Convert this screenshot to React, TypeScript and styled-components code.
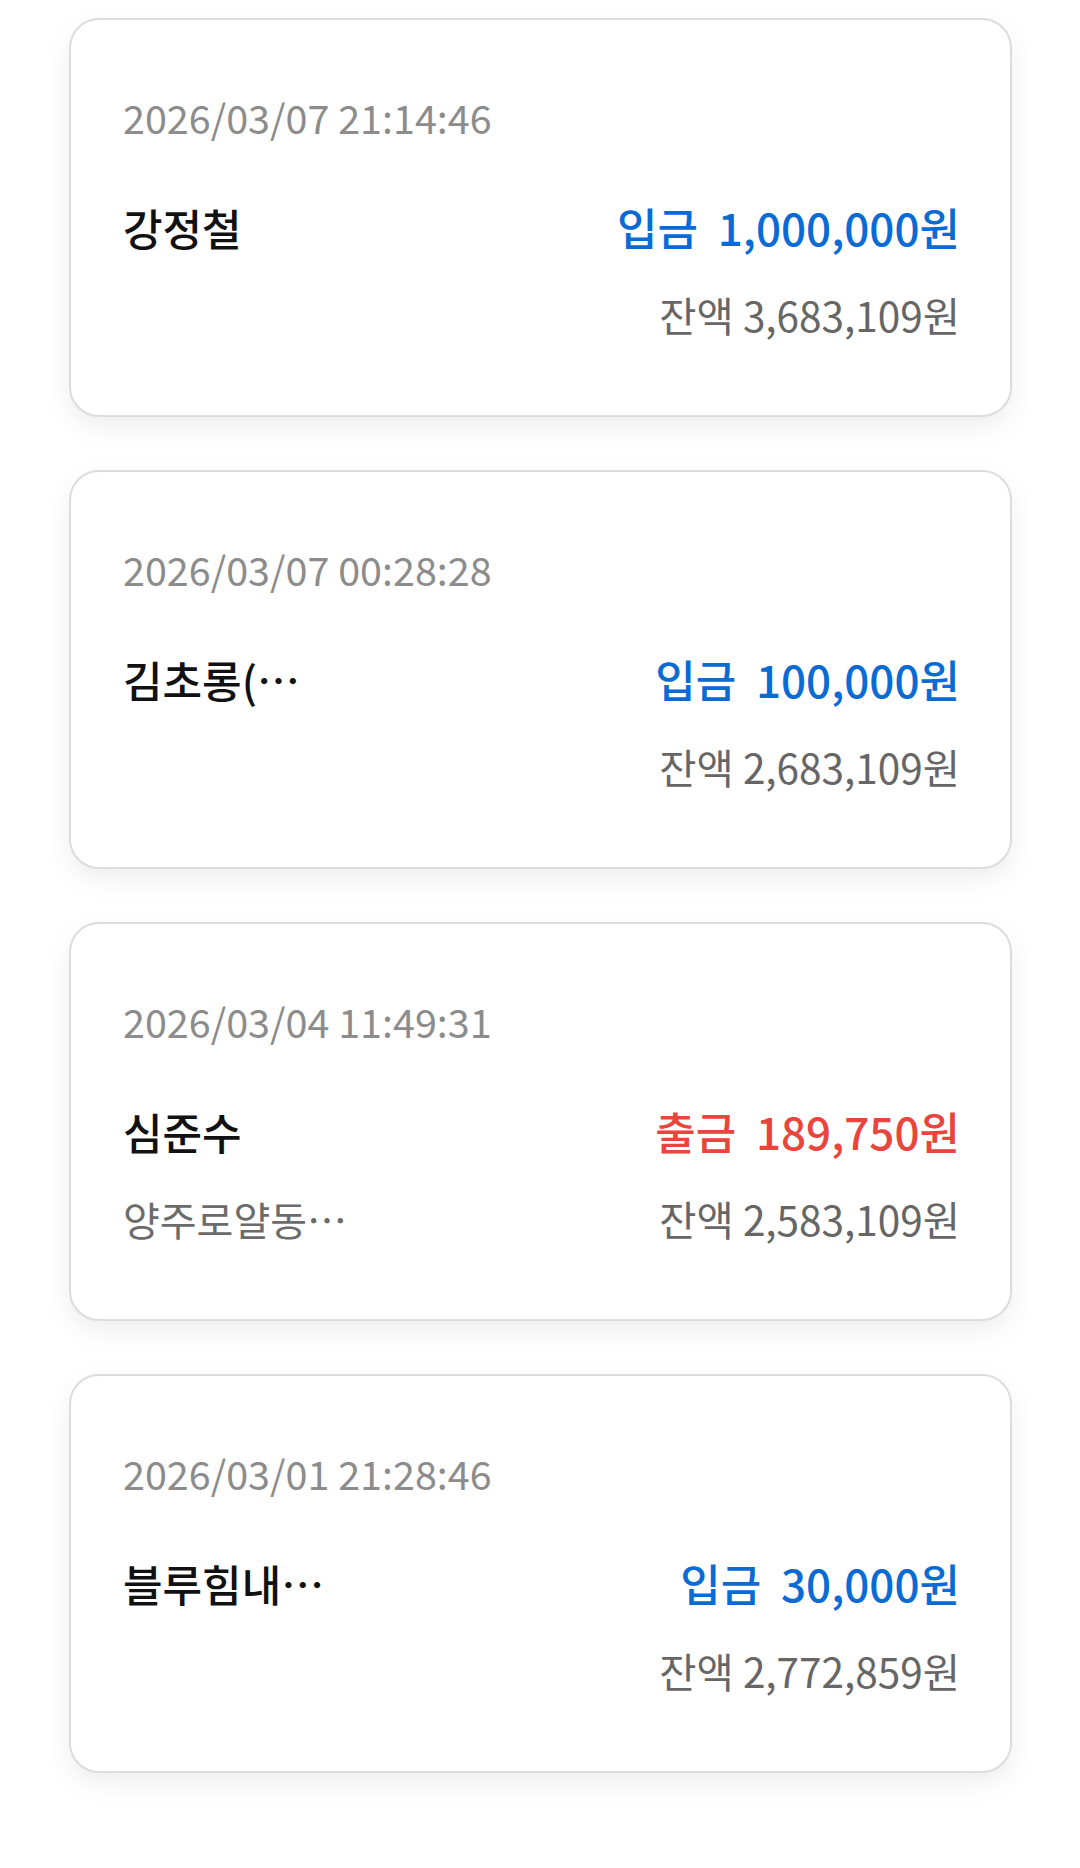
import React from 'react'
import styled, { createGlobalStyle } from 'styled-components'

const GlobalStyle = createGlobalStyle`
  html, body {
    margin: 0;
    padding: 0;
    background: #ffffff;
  }
  body {
    font-family: 'Noto Sans CJK KR', 'Noto Sans', sans-serif;
    -webkit-font-smoothing: antialiased;
  }
`

const List = styled.div`
  display: flex;
  flex-direction: column;
  gap: 53px;
  padding: 18px 68px 60px 69px;
`

const Card = styled.div`
  box-sizing: border-box;
  height: 399px;
  display: flex;
  flex-direction: column;
  padding: 67px 50px 0 52px;
  background: #ffffff;
  border: 2px solid #dcdcdc;
  border-radius: 30px;
  box-shadow: 0 10px 26px rgba(0, 0, 0, 0.07);
`

const DateText = styled.div`
  font-size: 39.5px;
  line-height: 60px;
  color: #8c8c8c;
`

const Row = styled.div<{ $top: number }>`
  display: flex;
  justify-content: space-between;
  align-items: baseline;
  margin-top: ${({ $top }) => $top}px;
`

const Name = styled.div`
  font-size: 43px;
  line-height: 64px;
  font-weight: 500;
  color: #111111;
`

const Amount = styled.div<{ $out: boolean }>`
  font-size: 44px;
  line-height: 64px;
  font-weight: 500;
  color: ${({ $out }) => ($out ? '#e8453c' : '#0a6bd4')};
  white-space: pre;
`

const Memo = styled.div`
  font-size: 40px;
  line-height: 60px;
  color: #6b6b6b;
`

const Balance = styled.div`
  font-size: 40.5px;
  line-height: 60px;
  color: #666666;
`

type Tx = {
  date: string
  name: string
  kind: '입금' | '출금'
  amount: string
  balance: string
  memo?: string
}

const txs: Tx[] = [
  { date: '2026/03/07 21:14:46', name: '강정철', kind: '입금', amount: '1,000,000원', balance: '3,683,109원' },
  { date: '2026/03/07 00:28:28', name: '김초롱(…', kind: '입금', amount: '100,000원', balance: '2,683,109원' },
  {
    date: '2026/03/04 11:49:31',
    name: '심준수',
    kind: '출금',
    amount: '189,750원',
    balance: '2,583,109원',
    memo: '양주로얄동…',
  },
  { date: '2026/03/01 21:28:46', name: '블루힘내…', kind: '입금', amount: '30,000원', balance: '2,772,859원' },
]

export default function App() {
  return (
    <>
      <GlobalStyle />
      <List>
        {txs.map((tx) => (
          <Card key={tx.date}>
            <DateText>{tx.date}</DateText>
            <Row $top={48}>
              <Name>{tx.name}</Name>
              <Amount $out={tx.kind === '출금'}>{`${tx.kind}  ${tx.amount}`}</Amount>
            </Row>
            <Row $top={26}>
              <Memo>{tx.memo ?? ''}</Memo>
              <Balance>잔액 {tx.balance}</Balance>
            </Row>
          </Card>
        ))}
      </List>
    </>
  )
}
